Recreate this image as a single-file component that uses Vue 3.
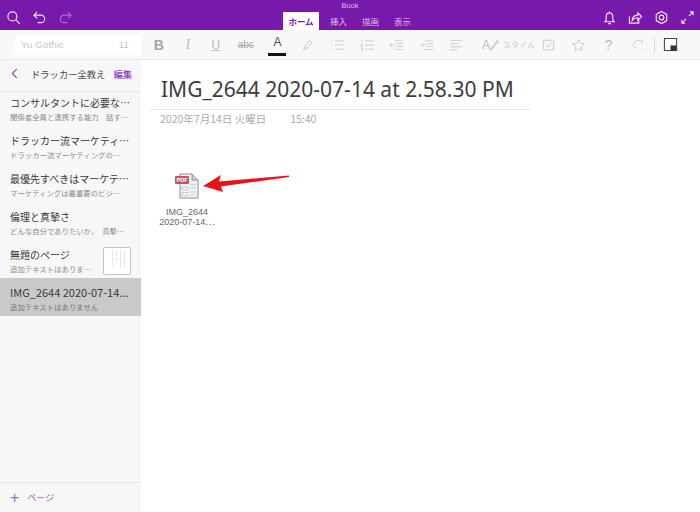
<script setup>
const pages = [
  { title: 'コンサルタントに必要な…', sub: '関係者全員と連携する能力　話す…' },
  { title: 'ドラッカー流マーケティ…', sub: 'ドラッカー流マーケティングの…' },
  { title: '最優先すべきはマーケテ…', sub: 'マーケティングは最重要のビジ…' },
  { title: '倫理と真摯さ', sub: 'どんな自分でありたいか。　真摯…' },
  { title: '無題のページ', sub: '追加テキストはありま…', thumb: true },
  { title: 'IMG_2644 2020-07-14...', sub: '追加テキストはありません', active: true },
]
</script>

<template>
  <div class="app">
    <header class="topbar">
      <div class="book">Book</div>
      <div class="topleft">
        <svg class="ic" viewBox="0 0 16 16"><circle cx="6.8" cy="6.8" r="4.8"/><path d="M10.3 10.3l4.4 4.4"/></svg>
        <svg class="ic" viewBox="0 0 16 16"><path d="M5.5 2L2 5.5 5.5 9M2 5.5h7.5a4 4 0 0 1 0 8H6"/></svg>
        <svg class="ic dim" viewBox="0 0 16 16"><path d="M10.5 2L14 5.5 10.5 9M14 5.5H6.5a4 4 0 0 0 0 8H10"/></svg>
      </div>
      <nav class="tabs">
        <span class="tab on">ホーム</span>
        <span class="tab">挿入</span>
        <span class="tab">描画</span>
        <span class="tab">表示</span>
      </nav>
      <div class="topright">
        <svg class="ic" viewBox="0 0 16 16"><path d="M3 12.5h10l-1.5-2V6.5a3.5 3.5 0 0 0-7 0v4zM6.5 14.5h3M8 1.5V3"/></svg>
        <svg class="ic" viewBox="0 0 16 16"><path d="M1.500 7v7h10v-3M4.500 11c.3-3.500 2.500-5.500 6-5.500V3l4 4-4 4V8.300c-2.500 0-4.500.8-6 2.700z"/></svg>
        <svg class="ic" viewBox="0 0 16 16"><path d="M8 1.500l5.600 3.200v6.600L8 14.500l-5.600-3.200V4.700z"/><circle cx="8" cy="8" r="2.500"/></svg>
        <svg class="ic" viewBox="0 0 16 16"><path d="M9.500 6.500L14 2M10.500 2H14v3.500M6.500 9.500L2 14M5.500 14H2v-3.500"/></svg>
      </div>
    </header>

    <div class="toolbar">
      <div class="fontbox"><span class="fname">Yu Gothic</span><span class="fsize">11</span></div>
      <div class="tools">
        <span class="tool bold">B</span>
        <span class="tool ital">I</span>
        <span class="tool under">U</span>
        <span class="tool strike">abc</span>
        <span class="tool color">A<i class="colorbar"></i></span>
        <span class="tool"><svg class="ti" viewBox="0 0 16 16"><path d="M5 10l5-7 3 2.500-5.500 6.500zM5 10l-1.500 3.500L7.500 12"/></svg></span>
        <span class="tool"><svg class="ti" viewBox="0 0 18 16"><path d="M6 3h11M6 8h11M6 13h11M1.500 3h1.500M1.500 8h1.500M1.500 13h1.500"/></svg></span>
        <span class="tool"><svg class="ti" viewBox="0 0 18 16"><path d="M6 3h11M6 8h11M6 13h11M2 1.500v3M1 7h2l-2 3h2M1 12h2v3H1"/></svg></span>
        <span class="tool"><svg class="ti" viewBox="0 0 18 16"><path d="M7 3h10M9 6.500h8M9 10h8M7 13.500h10M7 8H1M3.500 5.500L1 8l2.500 2.500"/></svg></span>
        <span class="tool"><svg class="ti" viewBox="0 0 18 16"><path d="M7 3h10M9 6.500h8M9 10h8M7 13.500h10M1 8h6M4.500 5.500L7 8l-2.500 2.500"/></svg></span>
        <span class="tool"><svg class="ti" viewBox="0 0 16 16"><path d="M1 3h14M1 6.500h10M1 10h14M1 13.500h8"/></svg></span>
        <span class="tool style">
          <span class="stA">A</span>
          <svg class="pen" viewBox="0 0 14 16"><path d="M1 14L11 2l2 2L3.500 15z"/></svg>
          <span class="stT">スタイル</span>
        </span>
        <span class="tool"><svg class="ti" viewBox="0 0 16 16"><path d="M2 2.500h12v11H2zM5 8l2.500 2.500L11.500 5"/></svg></span>
        <span class="tool"><svg class="ti" viewBox="0 0 16 16"><path d="M8 1.500l2 4.500 4.800.5-3.600 3.200 1 4.800L8 12.100l-4.200 2.400 1-4.800L1.200 6.500 6 6z"/></svg></span>
        <span class="tool help">?</span>
        <span class="tool"><svg class="ti" viewBox="0 0 18 16"><path d="M7 12.500L1.500 7.500 7 2.500h6.500V7M10.500 13.500h.9M13 13.500h.9M15.500 13.500h.9"/></svg></span>
        <span class="sep"></span>
        <span class="tool"><svg class="sticky" viewBox="0 0 16 16"><path class="s1" d="M1.500 1.500h13v13h-13z"/><path class="s2" d="M8 14.500V9h6.500v5.500z"/></svg></span>
      </div>
    </div>

    <div class="main">
      <aside class="side">
        <div class="sidehead">
          <svg class="back" viewBox="0 0 8 12"><path d="M6.500 1L1.500 6l5 5"/></svg>
          <span class="nb">ドラッカー全教え</span>
          <span class="edit">編集</span>
        </div>
        <div class="list">
          <div v-for="p in pages" :key="p.title" class="item" :class="{ active: p.active }">
            <div class="itext">
              <div class="ititle">{{ p.title }}</div>
              <div class="isub">{{ p.sub }}</div>
            </div>
            <div v-if="p.thumb" class="thumb">
              <i class="tline t1"></i><i class="tline t2"></i><i class="tline t3"></i><i class="tline t1"></i>
            </div>
          </div>
        </div>
        <div class="sidefoot"><span class="plus">+</span><span>ページ</span></div>
      </aside>

      <main class="page">
        <h1 class="title">IMG_2644 2020-07-14 at 2.58.30 PM</h1>
        <div class="meta"><span>2020年7月14日 火曜日</span><span>15:40</span></div>
        <div class="attach">
          <svg class="pdf" viewBox="0 0 24 26">
            <path class="pbody" d="M5 1h12l6 6v18H5z"/>
            <path class="pfold" d="M17 1v6h6"/>
            <path class="plines" d="M7 14h6v3H7zM7 19.500h6v3H7zM15 12h6M15 15h6M15 19h6M15 22h6"/>
            <rect class="pred" x="0" y="3" width="14" height="8" rx="1"/>
            <text x="7" y="9.300" class="ptext">PDF</text>
          </svg>
          <div class="fname2">IMG_2644<br>2020-07-14⋯</div>
          <svg class="arrow" viewBox="0 0 87 19">
            <path class="ared" d="M0 12 L18 1 L16 7.500 L86 1.500 L86 3 L18 12.500 L20 18 Z"/>
          </svg>
        </div>
      </main>
    </div>
  </div>
</template>

<style>
html, body { margin: 0; padding: 0; }
</style>

<style scoped>
.app {
  width: 700px; height: 512px; overflow: hidden; background: #fff; display: flex; flex-direction: column;
  font-family: "Noto Sans CJK JP", "Liberation Sans", sans-serif; color: #333;
}
.topbar {
  height: 30px; background: #7719aa; position: relative; display: flex; align-items: flex-end; flex: none;
}
.book {
  position: absolute; left: 0; right: 0; top: 1px; text-align: center; font: 7.500px/9px "Liberation Sans", sans-serif; color: #d9bde8;
}
.ic { width: 15px; height: 15px; fill: none; stroke: #f0e6f6; stroke-width: 1.200; }
.ic.dim { stroke: #a772c6; }
.topleft { display: flex; gap: 11px; padding: 0 0 5px 5.500px; width: 271px; box-sizing: border-box; flex: none; }
.topright { display: flex; gap: 11px; margin-left: auto; padding: 0 5px 5px 0; }
.tabs { display: flex; margin-left: 12px; }
.tab { width: 32px; height: 18px; font-size: 8.500px; line-height: 19px; text-align: center; color: #d8bde8; }
.tab.on { width: 36px; background: #fff; color: #7719aa; font-weight: 700; border-radius: 1px 1px 0 0; }
.tab:nth-child(2) { margin-left: 3.500px; }
.toolbar {
  height: 30px; flex: none; background: #f8f8f8; border-bottom: 1px solid #ececec; box-sizing: border-box; display: flex; align-items: center;
}
.fontbox {
  margin-left: 15px; width: 126px; height: 20px; background: #fff; border-radius: 2px; display: flex; align-items: center; justify-content: space-between;
  font: 9.500px "Liberation Sans", sans-serif; color: #c4c4c4; padding: 0 12px 0 6px; box-sizing: border-box; letter-spacing: .2px;
}
.tools { display: flex; align-items: center; margin-left: 3px; }
.tool {
  width: 29.700px; height: 28px; display: flex; align-items: center; justify-content: center; flex: none; color: #b5b5b5; position: relative;
  font-family: "Liberation Sans", sans-serif;
}
.ti { width: 15px; height: 14px; fill: none; stroke: #c6c6c6; stroke-width: 1; }
.bold { font-weight: 700; font-size: 14px; color: #a6a6a6; }
.tool.ital { width: 28.300px; font: italic 14px "Liberation Serif", serif; color: #bbb; }
.tool.under { width: 27.700px; font-size: 12px; text-decoration: underline; color: #bbb; }
.tool.strike { width: 32.300px; font-size: 10px; text-decoration: line-through; color: #aaa; }
.tool.color { width: 31px; font-size: 12px; color: #555; padding-bottom: 5px; box-sizing: border-box; }
.colorbar { position: absolute; left: 6px; width: 18px; height: 3px; bottom: 3px; background: #111; }
.help { font-size: 14px; color: #bdbdbd; }
.tool.style { width: 70px; justify-content: flex-start; padding-left: 11px; box-sizing: border-box; gap: 0; margin-right: -7px; }
.stA { font-size: 12px; color: #b4bfc8; }
.pen { width: 12px; height: 14px; fill: #c5d3e2; margin-left: -2px; }
.stT { font-size: 8px; color: #ccc; margin-left: 3px; white-space: nowrap; font-family: "Noto Sans CJK JP", sans-serif; }
.sep { width: 1px; height: 16px; background: #d8d8d8; margin: 0 1px 0 1px; flex: none; }
.sticky { width: 15px; height: 15px; }
.s1 { fill: #fff; stroke: #444; stroke-width: 1.100; }
.s2 { fill: #333; }
.main { flex: 1; display: flex; min-height: 0; }
.side {
  width: 141px; flex: none; background: #f7f7f7; display: flex; flex-direction: column; box-shadow: 1px 0 2px rgba(0,0,0,.04);
}
.sidehead {
  height: 32px; flex: none; display: flex; align-items: center; border-bottom: 1px solid #e9e9e9; box-sizing: border-box; padding: 0 9px 4px 11px; font-size: 9.300px;
}
.back { width: 7px; height: 11px; fill: none; stroke: #7e3fa3; stroke-width: 1.300; }
.nb { margin-left: 13px; color: #444; white-space: nowrap; }
.edit { margin-left: auto; color: #8f43c0; font-weight: 500; }
.list { flex: 1; }
.item { height: 38px; padding: 6.500px 9px 0 10px; box-sizing: border-box; display: flex; }
.item:first-child { height: 34px; padding-top: 2.500px; }
.item.active { background: #c9c9c9; }
.itext { flex: 1; min-width: 0; }
.ititle { font-size: 10px; line-height: 15px; color: #383838; white-space: nowrap; }
.active .ititle { font-size: 11px; }
.isub { font-size: 7.400px; line-height: 12px; margin-top: 1.500px; color: #8b8b8b; white-space: nowrap; }
.active .isub { color: #777; }
.thumb {
  width: 28px; height: 28px; margin: 0 1px 0 0; flex: none; background: #fff; border: 1px solid #c4c4c4; border-radius: 2px; box-sizing: border-box; display: flex; justify-content: flex-end; gap: 3px; padding: 3px 5px 0 0;
}
.tline { display: block; width: 1px; background: repeating-linear-gradient(#cfcfcf 0 1px, transparent 1px 2px); }
.t1 { height: 16px; } .t2 { height: 10px; } .t3 { height: 18px; }
.sidefoot {
  height: 30px; flex: none; border-top: 1px solid #e9e9e9; box-sizing: border-box; display: flex; align-items: center; padding-left: 10px; gap: 8px; font-size: 9px; color: #9a6fb3;
}
.plus { font: 300 16px/16px "Liberation Sans", sans-serif; color: #9a6fb3; }
.page { flex: 1; min-width: 0; background: #fff; padding: 16px 0 0 20px; position: relative; }
.title {
  margin: 0; width: 370px; margin-left: -11px; padding: 0 0 6px 11px; font: 400 21px/27px "Noto Sans", "Liberation Sans", sans-serif; color: #3c3c3c; border-bottom: 1px solid #e6e6e6; white-space: nowrap;
}
.meta { display: flex; gap: 24px; font-size: 10.500px; color: #aaa; line-height: 14px; margin: 2px 0 0 -1px; }
.attach { position: relative; margin-top: 47px; margin-left: -3px; width: 60px; text-align: center; }
.pdf { width: 24px; height: 26px; display: block; margin: 0 auto 0 17px; }
.pbody { fill: #f5f5f5; stroke: #8b8b8b; stroke-width: 1; }
.pfold { fill: #cfcfcf; stroke: #8b8b8b; stroke-width: 1; }
.plines { fill: none; stroke: #a8b9c9; stroke-width: .7; }
.pred { fill: #cf5062; }
.ptext { font: 700 5.500px "Liberation Sans", "Noto Sans CJK JP", sans-serif; fill: #fff; text-anchor: middle; }
.fname2 { font: 9px/10px "Liberation Sans", "Noto Sans CJK JP", sans-serif; color: #666; margin-top: 8px; white-space: nowrap; width: 58px; }
.arrow { position: absolute; left: 45px; top: 1px; width: 87px; height: 19px; }
.ared { fill: #e8141c; }
</style>
